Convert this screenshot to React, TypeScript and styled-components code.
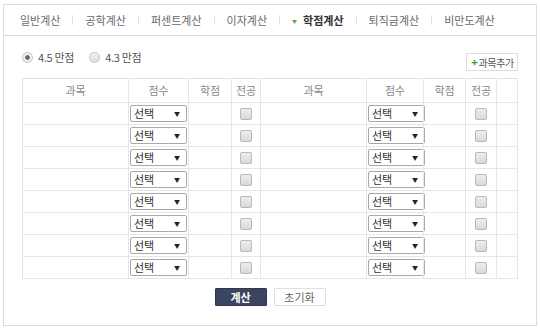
import styled, { createGlobalStyle } from 'styled-components';

const tabs = ['일반계산', '공학계산', '퍼센트계산', '이자계산', '학점계산', '퇴직금계산', '비만도계산'];
const ACTIVE = '학점계산';
const ROWS = 8;

const GlobalStyle = createGlobalStyle`
  body {
    margin: 0;
    background: #fff;
    font-family: "Noto Sans CJK KR", "Noto Sans", sans-serif;
    color: #555;
  }
`;

const App = () => {
  return (
    <Page>
      <GlobalStyle />
      <Nav>
        {tabs.map((name, i) => (
          <NavItem key={name}>
            {i > 0 && <Sep />}
            <Tab isActive={name === ACTIVE}>
              {name === ACTIVE && <Marker>▼</Marker>}
              {name}
            </Tab>
          </NavItem>
        ))}
      </Nav>
      <Body>
        <Toolbar>
          <RadioGroup>
            <RadioLabel>
              <Radio checked />
              4.5 만점
            </RadioLabel>
            <RadioLabel>
              <Radio />
              4.3 만점
            </RadioLabel>
          </RadioGroup>
          <AddButton>
            <Plus>+</Plus>과목추가
          </AddButton>
        </Toolbar>
        <Table>
          <colgroup>
            <col style={{ width: 106 }} />
            <col style={{ width: 60 }} />
            <col style={{ width: 43 }} />
            <col style={{ width: 29 }} />
            <col style={{ width: 106 }} />
            <col style={{ width: 57 }} />
            <col style={{ width: 42 }} />
            <col style={{ width: 31 }} />
            <col style={{ width: 21 }} />
          </colgroup>
          <thead>
            <tr>
              <Th>과목</Th>
              <Th>점수</Th>
              <Th>학점</Th>
              <Th>전공</Th>
              <Th>과목</Th>
              <Th>점수</Th>
              <Th>학점</Th>
              <Th>전공</Th>
              <Th />
            </tr>
          </thead>
          <tbody>
            {Array.from({ length: ROWS }).map((_, i) => (
              <tr key={i}>
                <Td />
                <SelectCell>
                  <Select>
                    선택<Arrow>▼</Arrow>
                  </Select>
                </SelectCell>
                <Td />
                <Td>
                  <Check />
                </Td>
                <Td />
                <SelectCell>
                  <Select>
                    선택<Arrow>▼</Arrow>
                  </Select>
                </SelectCell>
                <Td />
                <Td>
                  <Check />
                </Td>
                <Td />
              </tr>
            ))}
          </tbody>
        </Table>
        <Actions>
          <Button primary>계산</Button>
          <Button>초기화</Button>
        </Actions>
      </Body>
    </Page>
  );
};

const Page = styled.div`
  width: 534px;
  padding: 4px 3px 0 3px;
`;

const Nav = styled.div`
  display: flex;
  align-items: center;
  height: 30px;
  padding-left: 16px;
  border: 1px solid #dcdcdc;
`;

const NavItem = styled.div`
  display: flex;
  align-items: center;
`;

const Sep = styled.span`
  width: 1px;
  height: 10px;
  background: #e3e3e3;
  margin: 0 12px;
`;

const Tab = styled.span<{ isActive: boolean }>`
  display: flex;
  align-items: center;
  font-size: 11px;
  color: ${({ isActive }) => (isActive ? '#333' : '#6a6a6a')};
  font-weight: ${({ isActive }) => (isActive ? 700 : 400)};
`;

const Marker = styled.span`
  color: #5aa63c;
  font-size: 5px;
  margin-right: 6px;
`;

const Body = styled.div`
  border: 1px solid #dcdcdc;
  border-top: none;
  padding: 14px 18px 19px 18px;
  box-shadow: 0 1px 1px rgba(0, 0, 0, 0.06);
`;

const Toolbar = styled.div`
  display: flex;
  justify-content: space-between;
  align-items: flex-start;
`;

const RadioGroup = styled.div`
  display: flex;
  gap: 15px;
  height: 14px;
  align-items: center;
`;

const RadioLabel = styled.label`
  display: flex;
  align-items: center;
  gap: 5px;
  font-size: 11px;
  color: #555;
  letter-spacing: -0.3px;
`;

const Radio = styled.span<{ checked?: boolean }>`
  width: 9px;
  height: 9px;
  border-radius: 50%;
  border: 1px solid #c4c4c4;
  background: ${({ checked }) =>
    checked ? 'radial-gradient(circle, #666 0 2px, #eee 2.5px)' : 'linear-gradient(#f2f2f2, #dedede)'};
`;

const AddButton = styled.button`
  display: flex;
  align-items: center;
  margin-top: 3px;
  height: 18px;
  padding: 0 3px 0 4px;
  border: 1px solid #dcdcdc;
  background: #fff;
  font-family: inherit;
  font-size: 10px;
  letter-spacing: -0.3px;
  color: #555;
`;

const Plus = styled.span`
  color: #3f9a2b;
  font-weight: 700;
  font-size: 11px;
  margin-right: 1px;
`;

const Table = styled.table`
  margin-top: 7px;
  width: 495px;
  table-layout: fixed;
  border-collapse: collapse;
  border-top: 1px solid #e2e2e2;
  border-left: 1px solid #e2e2e2;
`;

const Th = styled.th`
  height: 23px;
  font-size: 11px;
  line-height: 1;
  font-weight: 400;
  color: #888;
  border-right: 1px solid #e6e6e6;
  border-bottom: 1px solid #e6e6e6;
  padding: 0;
`;

const Td = styled.td`
  height: 21px;
  padding: 0;
  font-size: 0;
  line-height: 0;
  text-align: center;
  vertical-align: middle;
  border-right: 1px solid #e6e6e6;
  border-bottom: 1px solid #e6e6e6;
`;

const SelectCell = styled(Td)`
  text-align: left;
  padding-left: 1px;
`;

const Select = styled.div`
  box-sizing: border-box;
  display: flex;
  justify-content: space-between;
  align-items: center;
  width: 57px;
  height: 17px;
  padding: 0 6px 0 3px;
  border: 1px solid #a9a9a9;
  border-radius: 2px;
  background: #fff;
  font-size: 11px;
  line-height: 1;
  color: #333;
`;

const Arrow = styled.span`
  font-size: 6px;
  color: #222;
`;

const Check = styled.span`
  display: inline-block;
  vertical-align: middle;
  width: 10px;
  height: 10px;
  border: 1px solid #b9b9b9;
  border-radius: 2px;
  background: linear-gradient(#eee, #d9d9d9);
`;

const Actions = styled.div`
  display: flex;
  justify-content: center;
  gap: 7px;
  margin-top: 9px;
`;

const Button = styled.button<{ primary?: boolean }>`
  width: 52px;
  height: 18px;
  padding: 0;
  font-family: inherit;
  font-size: 11px;
  line-height: 1;
  border-radius: 1px;
  border: 1px solid ${({ primary }) => (primary ? '#2f3850' : '#e0e0e0')};
  background: ${({ primary }) => (primary ? '#3b4560' : '#fff')};
  color: ${({ primary }) => (primary ? '#fff' : '#666')};
  font-weight: ${({ primary }) => (primary ? 700 : 400)};
`;

export default App;
